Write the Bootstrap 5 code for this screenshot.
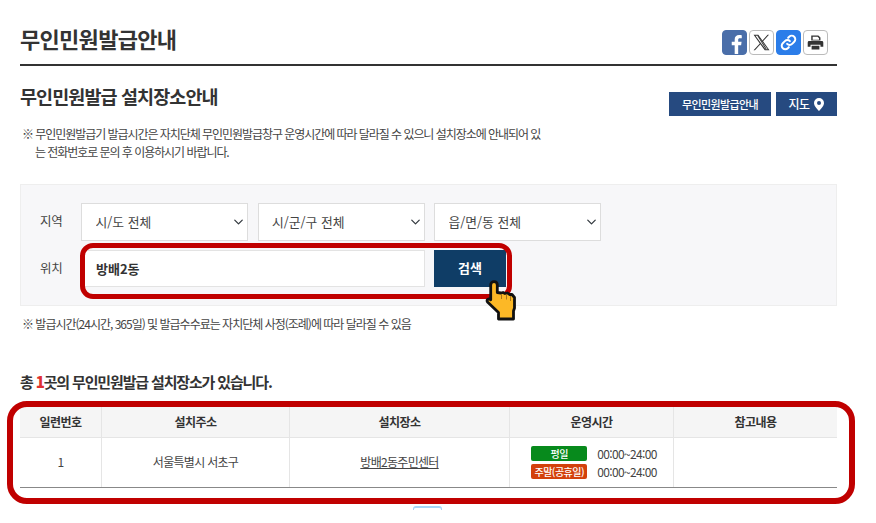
<!DOCTYPE html>
<html lang="ko"><head><meta charset="utf-8"><title>무인민원발급안내</title>
<link href="https://cdn.jsdelivr.net/npm/bootstrap@5.3.0/dist/css/bootstrap.min.css" rel="stylesheet">
<style>
html,body{height:523px;overflow:hidden}
body{font-family:"Noto Sans CJK KR","Noto Sans",sans-serif;color:#333;background:#fff;font-size:12px}
.pg{width:817px;margin-left:20px;padding-top:22px}
.tbar{height:44px;border-bottom:2px solid #333}
.tbar h1{font-size:22px;font-weight:700;letter-spacing:-.7px;margin:0;line-height:32px;color:#333}
.soc{gap:2px;padding-top:8px;padding-right:9px}
.soc span{width:25px;height:25px;border-radius:4px;display:flex;align-items:center;justify-content:center;border:1px solid #bbb;background:#fff}
.soc .fb{background:#4a6ea9;border-color:#4a6ea9}
.soc .lk{background:#2b7de9;border-color:#2b7de9}
.sub{margin-top:15px;height:36px}
.sub h2{font-size:18.5px;font-weight:700;letter-spacing:-.9px;margin:0;line-height:30px;color:#333}
.nbtn{background:#264a80;color:#fff;font-size:11px;font-weight:500;letter-spacing:-.6px;height:24px;border-radius:0;border:0;padding:0;display:flex;align-items:center;justify-content:center}
.nb1{width:102px}.nb2{width:61px;gap:5px;font-size:12px}
.sbtns{gap:5px;padding-top:11px}
.notes{margin-top:8px;height:36px;font-size:12px;letter-spacing:-1.05px;line-height:18px;color:#444;padding-left:2px}
.note1{white-space:nowrap}
.note2{padding-left:13px}
.panel{margin-top:23px;height:122px;background:#f7f7f9;border:1px solid #eee;padding:18px 0 0 19px;position:relative}
.lbl{width:32px;font-size:12.5px;letter-spacing:-.3px;color:#444;flex:none}
.frm{gap:9px}
.fsel{gap:9.500px}
.form-select.sel{width:167px;height:37.500px;border-radius:0;border:1px solid #ddd;font-size:12.800px;padding:0 13.500px;color:#444;background-position:right 3px center;background-size:11px 10px}
.form-control.inp{width:343.500px;height:37px;border-radius:0;border:1px solid #e3e3e3;font-size:13px;font-weight:700;padding:0 14px;color:#333}
.form-control.inp:focus{box-shadow:none}
.sbtn{width:72px;height:37px;background:#0f3d66;color:#fff;font-size:13px;font-weight:700;border:0;border-radius:0;padding:0;margin-left:.5px}
.rw2{margin-top:9px}
.redbox{position:absolute;border:5px solid #c00000;pointer-events:none}
.rb1{left:59px;top:58px;width:432px;height:56px;border-radius:13px}
.hand{position:absolute;left:464px;top:95px;width:31px;height:41px}
.note3{margin:5px 0 0 2px;font-size:12px;letter-spacing:-1px;line-height:26px;color:#444}
.tot{margin:33px 0 0;font-size:15px;font-weight:700;letter-spacing:-1.150px;line-height:24px;color:#333}
.tot b{color:#e03131}
.twrap{position:relative;margin-top:13px}
.rb2{left:-13px;top:-6px;width:848px;height:103px;border-width:6px;border-radius:20px}
.tb{width:817px;table-layout:fixed;border-collapse:collapse;margin:0;font-size:12px;letter-spacing:-.7px}
.tb th{background:#f5f5f5;height:30px;font-weight:700;text-align:center;border-bottom:1px solid #e5e5e5;border-right:1px solid #e5e5e5;padding:0;color:#333;font-size:12px;letter-spacing:-.5px}
.tb td{height:50px;text-align:center;vertical-align:middle;border-right:1px solid #e5e5e5;border-bottom:1px solid #888;padding:0;color:#444}
.tb th:last-child,.tb td:last-child{border-right:0}
.tb a{color:#444}
.tb td.tcell{padding:1px 0 0 5px}
.opr{gap:10px;line-height:18px}
.tg{width:56px;height:15px;border-radius:2px;color:#fff;font-size:10px;font-weight:500;line-height:15px;letter-spacing:-.5px;flex:none}
.tg1{background:#078a1c}.tg2{background:#d3410c}
.tm{font-size:12px;letter-spacing:-.65px;color:#444}
.pgb{position:absolute;left:393px;top:99px;width:29px;height:4px;border:1px solid #a6d5f7;border-top-width:2px;border-bottom:0;border-radius:3px 3px 0 0;background:#fff}
</style></head><body>
<div class="pg">
 <div class="tbar d-flex justify-content-between">
  <h1>무인민원발급안내</h1>
  <div class="soc d-flex">
   <span class="fb"><svg width="25" height="25" viewBox="0 0 25 25"><path fill="#fff" d="M16.500 25v-9.500h3.200l.5-3.700h-3.700V9.700c0-1.100.4-1.800 1.900-1.800h2V4.600c-.4 0-1.500-.2-2.900-.2-2.900 0-4.800 1.700-4.800 4.900v2.500H9.500v3.700h3.200V25z"/></svg></span>
   <span><svg width="17" height="17" viewBox="0 0 24 24"><path fill="#333" d="M14.200 10.300 22.600 1h-2l-7.300 8.100L7.500 1H.8l8.800 12.500L.8 23h2l7.700-8.500L16.600 23h6.700zM3.500 2.500h3.100l14.200 19h-3.100z"/><path fill="#333" d="M6 2.500h1.500l12 19H18z"/></svg></span>
   <span class="lk"><svg width="17" height="17" viewBox="0 0 24 24" fill="none" stroke="#fff" stroke-width="2.800" stroke-linecap="round"><path d="M10 14a5 5 0 0 0 7.100 0l3-3a5 5 0 0 0-7.100-7.100l-1.500 1.500"/><path d="M14 10a5 5 0 0 0-7.100 0l-3 3a5 5 0 0 0 7.100 7.100l1.500-1.500"/></svg></span>
   <span><svg width="17" height="17" viewBox="0 0 24 24"><path fill="#333" d="M6 2h10l3 3v4H6zm2 2v4h9V6l-2-2zM3 10h18a2 2 0 0 1 2 2v6h-4v-3H5v3H1v-6a2 2 0 0 1 2-2zM6.500 16.500h11V22h-11z"/></svg></span>
  </div>
 </div>
 <div class="sub d-flex justify-content-between">
  <h2>무인민원발급 설치장소안내</h2>
  <div class="sbtns d-flex">
   <button class="btn nbtn nb1">무인민원발급안내</button>
   <button class="btn nbtn nb2">지도<svg width="10" height="13" viewBox="0 0 10 13"><path fill="#fff" fill-rule="evenodd" d="M5 0a5 5 0 0 1 5 5c0 3-3 5.800-5 8-2-2.200-5-5-5-8a5 5 0 0 1 5-5zm0 3a2 2 0 1 0 0 4 2 2 0 0 0 0-4z"/></svg></button>
  </div>
 </div>
 <div class="notes">
  <div class="note1">※ 무인민원발급기 발급시간은 자치단체 무인민원발급창구 운영시간에 따라 달라질 수 있으니 설치장소에 안내되어 있</div>
  <div class="note2">는 전화번호로 문의 후 이용하시기 바랍니다.</div>
 </div>
 <div class="panel">
  <div class="d-flex align-items-center frm">
   <div class="lbl">지역</div>
   <div class="d-flex fsel">
    <select class="form-select sel"><option>시/도 전체</option></select>
    <select class="form-select sel"><option>시/군/구 전체</option></select>
    <select class="form-select sel"><option>읍/면/동 전체</option></select>
   </div>
  </div>
  <div class="d-flex align-items-center frm rw2">
   <div class="lbl">위치</div>
   <input class="form-control inp" value="방배2동">
   <button class="btn sbtn">검색</button>
  </div>
  <div class="redbox rb1"></div>
  <svg class="hand" viewBox="-1 -1 31 41"><path fill="#fcb826" stroke="#111" stroke-width="2.800" stroke-linejoin="round" d="M4.700 4C4.700-.5 11.300-.5 11.300 4V11.500L15 12l2-.5 2 1 2.500-.5 2 1.500 2.500 0 2.500 3V27l-1 3v8H12.500V31.500L1.500 21c-1-1.500 0-3.500 2-3l1.200.8z"/><path fill="none" stroke="#a8741a" stroke-width="1" d="M15.500 13v5M20.500 13.500v5M24.500 15v5"/></svg>
 </div>
 <p class="note3">※ 발급시간(24시간, 365일) 및 발급수수료는 자치단체 사정(조례)에 따라 달라질 수 있음</p>
 <p class="tot">총 <b>1</b>곳의 무인민원발급 설치장소가 있습니다.</p>
 <div class="twrap">
  <table class="tb">
   <colgroup><col style="width:81.500px"><col style="width:188px"><col style="width:220px"><col style="width:164px"><col style="width:163.500px"></colgroup>
   <thead><tr><th>일련번호</th><th>설치주소</th><th>설치장소</th><th>운영시간</th><th>참고내용</th></tr></thead>
   <tbody><tr><td>1</td><td>서울특별시 서초구</td><td><a href="#">방배2동주민센터</a></td>
    <td class="tcell"><div class="d-flex justify-content-center align-items-center opr"><span class="tg tg1">평일</span><span class="tm">00:00~24:00</span></div>
        <div class="d-flex justify-content-center align-items-center opr"><span class="tg tg2">주말(공휴일)</span><span class="tm">00:00~24:00</span></div></td><td></td></tr></tbody>
  </table>
  <div class="redbox rb2"></div>
  <div class="pgb"></div>
 </div>
</div>
</body></html>
